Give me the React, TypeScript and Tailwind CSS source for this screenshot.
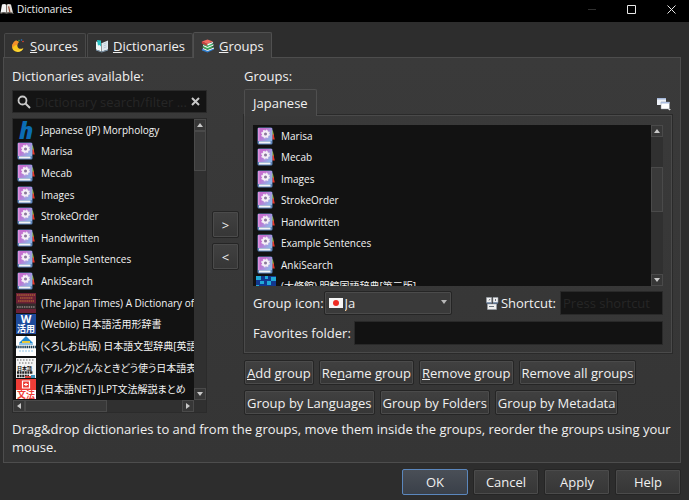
import type { ReactNode } from 'react'

const addons = ['Marisa', 'Mecab', 'Images', 'StrokeOrder', 'Handwritten', 'Example Sentences', 'AnkiSearch']

function AppIcon() {
  return (
    <svg width="14" height="12" viewBox="0 0 14 12" aria-hidden="true">
      <path d="M2 1.500C4 .5 5.500 1 6.500 2v8C5 9 3 9 .5 10z" fill="#f2f2f2" />
      <path d="M11 1.500C9 .5 7.500 1 6.500 2v8C8 9 10 9 13 10z" fill="#e6e2dc" />
      <path d="M8 3.500l1.200-.3 1.300 6-1.300-.3z" fill="#9b4a36" />
      <path d="M6.500 2v8M.5 10.500c2-1 4.500-1 6 0 1.500-1 4.500-1 7 0" stroke="#77716a" fill="none" />
    </svg>
  )
}

function SourcesIcon() {
  return (
    <svg width="14" height="14" viewBox="0 0 14 14" aria-hidden="true">
      <path d="M4 1.500C0 4-1 8.500 1.500 11.300c3 3 8.500 2 10-2.300-2.500 1.500-5.500 1-6-1.500S5.500 4 7 3z" fill="#f8c81c" />
      <path d="M4 1.500C.5 3.500-.3 6.500.5 9 2 6.500 3.500 5.500 5.300 6c0-1.500.7-2.300 1.700-3z" fill="#f2902b" />
      <path d="M1 9.500c2 2.500 6.500 3 10-.3-1.500 3.800-7 4.800-10 .3z" fill="#ffe14a" />
      <circle cx="7" cy="1.500" r=".8" fill="#3c9b48" />
      <circle cx="9.500" cy="1" r=".8" fill="#2b78c8" />
      <circle cx="11" cy="2.500" r=".8" fill="#e44330" />
    </svg>
  )
}

function DictionariesIcon() {
  return (
    <svg width="14" height="14" viewBox="0 0 14 14" aria-hidden="true">
      <path d="M1 2.500l5.500 1.500v8.500L1 10.500z" fill="#eef7f8" />
      <path d="M13 1.500L7 4v8.500l6-2z" fill="#dfe9f0" />
      <path d="M2 1l4 .5v6L4.500 6 3 6.500z" fill="#25c2c4" />
      <path d="M8.500 5l3-1.200M8.500 7l3-1.200M8.500 9l3-1.200" stroke="#a9bac6" strokeWidth=".7" />
      <path d="M1 11l5.700 2L13 11" stroke="#7d96ab" fill="none" />
    </svg>
  )
}

function GroupsIcon() {
  return (
    <svg width="14" height="14" viewBox="0 0 14 14" aria-hidden="true">
      <path d="M1 9.500l5 2 7-2.500v1.500L6.500 13.500 1 11.500z" fill="#2f7fd0" />
      <path d="M1 8l5-2 7 2-6.500 3z" fill="#3aa757" />
      <path d="M2 9.500l4.500 2L13 9" stroke="#fff" fill="none" />
      <path d="M1.500 5.500l5-2 6.500 2-6.500 2.800z" fill="#39b06c" />
      <path d="M2 6.500l4.500 2L12.500 6" stroke="#fff" fill="none" />
      <path d="M.8 2.500L6.500.5 12 2.500 6.500 5z" fill="#f06a62" />
      <path d="M.8 2.500v2L6.500 7V5z" fill="#c93c3c" />
      <path d="M6.500 5.800l5.500-2.300" stroke="#fff" strokeWidth="1.300" />
    </svg>
  )
}

function AddonIcon() {
  return (
    <svg width="18" height="18" viewBox="0 0 18 18" className="shrink-0" aria-hidden="true">
      <defs>
        <linearGradient id="cover" x1="0" y1="0" x2="1" y2=".6">
          <stop offset=".4" stopColor="#c46fd0" />
          <stop offset="1" stopColor="#8fb2e6" />
        </linearGradient>
      </defs>
      <path d="M14 1.500l2 2.500 1 5h-3z" fill="#b8c92c" />
      <path d="M15 8l1.500-1 1.300 5.500H15z" fill="#e8392a" />
      <path d="M1.500.5H14a1.500 1.500 0 0 1 1.500 1.500v14a1.500 1.500 0 0 1-1.500 1.500H2A1.500 1.500 0 0 1 .5 16V1.500z" fill="#5f86bd" />
      <path d="M1 1h14v13H1z" fill="url(#cover)" />
      <path d="M1 1h1.500v13H1z" fill="#dc93dc" />
      <path d="M2 14.500h11.500v2H2z" fill="#f4f4f4" />
      <circle cx="8.500" cy="7" r="3.700" fill="none" stroke="#ece4f0" strokeWidth="1.500" strokeDasharray="1.600 1.306" />
      <circle cx="8.500" cy="7" r="2.500" fill="none" stroke="#f4f0f6" strokeWidth="2" />
      <circle cx="8.500" cy="7" r="1.300" fill="#8b7f92" />
    </svg>
  )
}

function MorphologyIcon() {
  return (
    <svg width="20" height="20" viewBox="0 0 20 20" className="shrink-0 overflow-visible" aria-hidden="true">
      <text x="3" y="19" fontSize="23" fontWeight="800" fontStyle="italic" fontFamily="Open Sans, sans-serif" fill="#0b6cb5">h</text>
    </svg>
  )
}

function JapanTimesIcon() {
  return (
    <svg width="20" height="20" viewBox="0 0 20 20" className="shrink-0" aria-hidden="true">
      <path d="M0 0h20v20H0z" fill="#6b2035" />
      <path d="M1 2h18M4 5h13M2 8h16" stroke="#c47a35" strokeWidth="1.200" strokeDasharray="1.500 .6" />
      <path d="M0 10.500h20V16H0z" fill="#332b2c" />
      <path d="M1 14h18" stroke="#8d8580" strokeWidth="1.500" strokeDasharray="1.500 .8" />
    </svg>
  )
}

function WeblioIcon() {
  return (
    <svg width="20" height="20" viewBox="0 0 20 20" className="shrink-0 overflow-visible" aria-hidden="true">
      <path d="M0 0h20v20H0z" fill="#1e4b9c" />
      <text x="10" y="9" textAnchor="middle" fontSize="11" fontWeight="700" fontFamily="Open Sans, sans-serif" fill="#fff">W</text>
      <text x="10" y="18" textAnchor="middle" fontSize="9" fontWeight="700" fontFamily="Noto Sans CJK JP, sans-serif" fill="#fff">活用</text>
    </svg>
  )
}

function KuroshioIcon() {
  return (
    <svg width="20" height="20" viewBox="0 0 20 20" className="shrink-0" aria-hidden="true">
      <path d="M0 0h20v20H0z" fill="#fdfdfd" />
      <path d="M10 0l7 7H3z" fill="#2087cf" />
      <path d="M6 5h8v2H6z" fill="#e9c93b" />
      <path d="M3 8h14" stroke="#2087cf" />
      <path d="M0 11h20" stroke="#24455c" strokeWidth="2.500" strokeDasharray="1.500 .6" />
      <path d="M3 15h14" stroke="#8fc3e4" strokeDasharray="2 1" />
    </svg>
  )
}

function AlcIcon() {
  return (
    <svg width="20" height="20" viewBox="0 0 20 20" className="shrink-0 overflow-visible" aria-hidden="true">
      <path d="M0 0h20v20H0z" fill="#f4f4f4" />
      <path d="M1 2h17M3 5h14" stroke="#999" strokeWidth="1.500" strokeDasharray="1.500 1.500" />
      <text x="1" y="12" fontSize="5" fontWeight="700" fontFamily="Noto Sans CJK JP, sans-serif" fill="#111">日本語</text>
      <path d="M1 14.500h16M1 18h12" stroke="#222" strokeWidth="2.500" strokeDasharray="2 .6" />
      <path d="M9 18h6v2H9z" fill="#d6453c" />
      <path d="M15 17h4v3h-4z" fill="#3e91bd" />
    </svg>
  )
}

function NetIcon() {
  return (
    <svg width="20" height="20" viewBox="0 0 20 20" className="shrink-0 overflow-visible" aria-hidden="true">
      <path d="M0 0h20v20H0z" fill="#fff" />
      <path d="M0 0h20v11H0z" fill="#ee3d37" />
      <path d="M6.500 2h7v7h-7zM8 5.500h4M10 4v3" fill="none" stroke="#fff" strokeWidth="1.200" />
      <text x="10" y="19" textAnchor="middle" fontSize="9" fontWeight="700" fontFamily="Noto Sans CJK JP, sans-serif" fill="#ee3d37">文法</text>
    </svg>
  )
}

function MeikyoIcon() {
  return (
    <svg width="20" height="20" viewBox="0 0 20 20" className="shrink-0" aria-hidden="true">
      <path d="M0 0h20v20H0z" fill="#12388f" />
      <path d="M0 0h5v4H0zM9 0h3v3H9zM15 1h5v4h-5zM4 5h4v3H4zM11 5h4v4h-4zM0 9h3v3H0z" fill="#21a9d6" />
    </svg>
  )
}

function WindowsIcon() {
  return (
    <svg width="14" height="14" viewBox="0 0 14 14" aria-hidden="true">
      <path d="M0 1h9v7H0z" fill="#eef2f8" />
      <path d="M0 1h9v1.500H0z" fill="#a3b6d8" />
      <path d="M4 5h8.500v7H4z" fill="#fff" stroke="#8a929c" strokeWidth=".5" />
      <path d="M4 5h8.500v1.500H4z" fill="#a9bcdf" />
      <path d="M11 12h3l-1.500 1.500z" fill="#ddd" />
    </svg>
  )
}

function KeysIcon() {
  return (
    <svg width="13" height="13" viewBox="0 0 13 13" aria-hidden="true">
      <path d="M.5.500h5v5h-5zM7 .5h5v5H7zM1.500 7h9v5.500h-9z" fill="#f0f0f0" stroke="#9aa3ad" strokeWidth=".6" />
      <path d="M3 3.500L4 2M9.500 2v2M3 9.500h5" stroke="#6a737e" />
      <path d="M.5 6h5M7 6h5" stroke="#7090bb" />
    </svg>
  )
}

function Arrow({ dir }: { dir: 'up' | 'down' | 'left' | 'right' }) {
  const turn = { up: 0, right: 90, down: 180, left: 270 }[dir]
  return (
    <span className="flex size-3 shrink-0 items-center justify-center border border-[#4a4a4a] bg-[#373737]">
      <svg width="8" height="8" viewBox="0 0 8 8" aria-hidden="true">
        <path d="M4 2l3 4H1z" fill="#c8c8c8" transform={`rotate(${turn} 4 4)`} />
      </svg>
    </span>
  )
}

function Btn({ children, className = '' }: { children: ReactNode; className?: string }) {
  return (
    <button
      type="button"
      className={`rounded-xs border border-[#252525] bg-linear-to-b from-[#414141] to-[#363636] shadow-[inset_0_0_0_1px_#4b4b4b] ${className}`}
    >
      {children}
    </button>
  )
}

function Row({ icon, children }: { icon: ReactNode; children: ReactNode }) {
  return (
    <li className="flex items-center gap-[5px] whitespace-nowrap">
      <span className="flex w-5 shrink-0 justify-center">{icon}</span>
      {children}
    </li>
  )
}

const listText = "text-[10px] leading-4 text-[#f4f4f4] [font-feature-settings:'palt']"

export default function App() {
  return (
    <div className="flex min-h-screen flex-col bg-[#2d2d2d] font-['Open_Sans','Noto_Sans_CJK_JP',sans-serif] text-[13px] leading-[18px] text-[#f0f0f0]">
      <header className="flex h-[22px] items-center bg-black pb-1">
        <AppIcon />
        <h1 className="ml-[3px] text-[10px]">Dictionaries</h1>
        <div className="ml-auto flex gap-[31px] pr-[13px]">
          <button type="button" aria-label="Minimize">
            <svg width="8" height="9" viewBox="0 0 8 9"><path d="M0 4.500h8" stroke="#303030" /></svg>
          </button>
          <button type="button" aria-label="Maximize">
            <svg width="9" height="9" viewBox="0 0 9 9"><path d="M.5.500h8v8h-8z" fill="none" stroke="#e8e8e8" /></svg>
          </button>
          <button type="button" aria-label="Close">
            <svg width="9" height="9" viewBox="0 0 9 9"><path d="M.5.500l8 8M8.500.500l-8 8" stroke="#e8e8e8" /></svg>
          </button>
        </div>
      </header>

      <div className="flex flex-1 flex-col pt-[10px] pr-2 pl-[3px]">
        <div role="tablist" className="flex items-end pl-px">
          <button type="button" role="tab" aria-selected="false" className="flex h-6 items-center gap-1 rounded-t-xs border border-b-0 border-[#494949] bg-[#333] px-[7px]">
            <SourcesIcon />
            <span><u>S</u>ources</span>
          </button>
          <button type="button" role="tab" aria-selected="false" className="ml-px flex h-6 items-center gap-1 rounded-t-xs border border-b-0 border-[#494949] bg-[#333] px-[7px]">
            <DictionariesIcon />
            <span><u>D</u>ictionaries</span>
          </button>
          <button type="button" role="tab" aria-selected="true" className="z-10 -mb-px flex h-[26px] items-center gap-1 rounded-t-xs border border-b-0 border-[#505050] bg-[#3a3a3a] px-[7px]">
            <GroupsIcon />
            <span><u>G</u>roups</span>
          </button>
        </div>

        <main className="flex flex-1 flex-col border border-[#4d4d4d] bg-linear-to-b from-[#3a3a3a] to-[#353535] px-2 pt-[9px] pb-[5px]">
          <div className="flex">
            <section className="flex w-[195px] shrink-0 flex-col">
              <label htmlFor="filter">Dictionaries available:</label>
              <div className="mt-[5px] flex h-[23px] items-center border border-[#2a2a2a] bg-[#141414] px-1">
                <svg width="14" height="14" viewBox="0 0 14 14" aria-hidden="true">
                  <circle cx="5.500" cy="5.500" r="4" fill="none" stroke="#c9c9c9" strokeWidth="1.800" />
                  <path d="M8.500 8.500l4.500 4.500" stroke="#c9c9c9" strokeWidth="2" />
                </svg>
                <input id="filter" placeholder="Dictionary search/filter ..." className="ml-1 w-full min-w-0 flex-1 outline-none placeholder:text-[#262626]" />
                <button type="button" aria-label="Clear" className="px-[2px]">
                  <svg width="9" height="9" viewBox="0 0 9 9"><path d="M1 1l7 7M8 1L1 8" stroke="#c9c9c9" strokeWidth="2" /></svg>
                </button>
              </div>

              <div className="mt-[5px] border border-[#2b2b2b] bg-[#303030]">
                <div className="flex h-[281px]">
                  <ul className={`grid min-w-0 flex-1 auto-rows-fr overflow-hidden bg-[#121212] pl-[3px] ${listText}`}>
                    <Row icon={<MorphologyIcon />}>Japanese (JP) Morphology</Row>
                    {addons.map((name) => (
                      <Row key={name} icon={<AddonIcon />}>{name}</Row>
                    ))}
                    <Row icon={<JapanTimesIcon />}>(The Japan Times) A Dictionary of Japanese</Row>
                    <Row icon={<WeblioIcon />}>(Weblio) 日本語活用形辞書</Row>
                    <Row icon={<KuroshioIcon />}>(くろしお出版) 日本語文型辞典[英語版]</Row>
                    <Row icon={<AlcIcon />}>(アルク)どんなときどう使う日本語表現文型</Row>
                    <Row icon={<NetIcon />}>(日本語NET) JLPT文法解説まとめ</Row>
                  </ul>
                  <div className="flex w-3 flex-col" aria-hidden="true">
                    <Arrow dir="up" />
                    <span className="h-10 border border-[#4a4a4a] bg-[#3a3a3a]" />
                    <span className="flex-1" />
                    <Arrow dir="down" />
                  </div>
                </div>
                <div className="flex pr-3" aria-hidden="true">
                  <Arrow dir="left" />
                  <span className="w-[82px] border border-[#4a4a4a] bg-[#393939]" />
                  <span className="flex-1" />
                  <Arrow dir="right" />
                </div>
              </div>
            </section>

            <div className="mx-[5px] flex flex-col gap-[5px] pt-[144px]">
              <Btn className="h-[27px] w-[27px]">&gt;</Btn>
              <Btn className="h-[27px] w-[27px]">&lt;</Btn>
            </div>

            <section className="min-w-0 flex-1">
              <h2>Groups:</h2>
              <div className="mt-1 flex items-end justify-between pr-px">
                <button type="button" role="tab" aria-selected="true" className="z-10 -mb-px h-[27px] rounded-t-xs border border-b-0 border-[#4f4f4f] bg-[#3a3a3a] px-2">
                  Japanese
                </button>
                <button type="button" aria-label="All groups" className="pb-1"><WindowsIcon /></button>
              </div>
              <div className="border border-[#4a4a4a] px-2 pt-[9px] pb-[7px] shadow-[0_0_0_1px_#2a2a2a]">
                <div className="flex h-[161px] overflow-hidden">
                  <ul className={`grid h-[172px] min-w-0 flex-1 auto-rows-fr bg-[#121212] pl-[3px] ${listText}`}>
                    {addons.map((name) => (
                      <Row key={name} icon={<AddonIcon />}>{name}</Row>
                    ))}
                    <Row icon={<MeikyoIcon />}>(大修館) 明鏡国語辞典[第三版]</Row>
                  </ul>
                  <div className="flex w-3 flex-col bg-[#303030]" aria-hidden="true">
                    <Arrow dir="up" />
                    <span className="h-[30px]" />
                    <span className="h-[45px] border border-[#4a4a4a] bg-[#3a3a3a]" />
                    <span className="flex-1" />
                    <Arrow dir="down" />
                  </div>
                </div>

                <div className="mt-[5px] flex items-center">
                  <label htmlFor="icon">Group icon:</label>
                  <div className="relative w-[128px]">
                    <select id="icon" className="h-6 w-full appearance-none rounded-xs border border-[#252525] bg-[#3a3a3a] pl-5 shadow-[inset_0_0_0_1px_#4b4b4b]">
                      <option>Ja</option>
                    </select>
                    <svg width="14" height="10" viewBox="0 0 14 10" className="pointer-events-none absolute top-[7px] left-[5px]" aria-hidden="true">
                      <path d="M0 0h14v10H0z" fill="#f5f5f5" /><circle cx="7" cy="5" r="3" fill="#ee2a22" />
                    </svg>
                    <svg width="8" height="5" viewBox="0 0 8 5" className="pointer-events-none absolute top-[9px] right-1" aria-hidden="true">
                      <path d="M1 0h6L4 4z" fill="#b8b8b8" />
                    </svg>
                  </div>
                  <label htmlFor="shortcut" className="ml-auto flex items-center gap-[2px]"><KeysIcon />Shortcut:</label>
                  <input id="shortcut" placeholder="Press shortcut" className="ml-1 h-6 w-[103px] border border-[#292929] bg-[#141414] px-[2px] outline-none placeholder:text-[#262626]" />
                </div>

                <div className="mt-[6px] flex items-center gap-[3px]">
                  <label htmlFor="favorites">Favorites folder:</label>
                  <input id="favorites" className="h-6 min-w-0 flex-1 border border-[#292929] bg-[#121212] px-1 outline-none" />
                </div>
              </div>

              <div className="mt-[7px] flex flex-wrap gap-[5px]">
                <Btn className="h-[25px] px-[2px]"><u>A</u>dd group</Btn>
                <Btn className="h-[25px] px-[2px]">Re<u>n</u>ame group</Btn>
                <Btn className="h-[25px] px-[2px]"><u>R</u>emove group</Btn>
                <Btn className="h-[25px] px-[2px]">Remove all groups</Btn>
                <Btn className="h-[25px] px-[2px]">Group by Languages</Btn>
                <Btn className="h-[25px] px-[2px]">Group by Folders</Btn>
                <Btn className="h-[25px] px-[2px]">Group by Metadata</Btn>
              </div>
            </section>
          </div>

          <p className="mt-[5px]">
            Drag&amp;drop dictionaries to and from the groups, move them inside the groups, reorder the groups using your mouse.
          </p>
        </main>

        <footer className="flex justify-end gap-[5px] pt-[6px] pb-[5px]">
          <button type="button" className="h-[26px] w-[66px] rounded-xs border border-[#5b87bd] bg-linear-to-b from-[#4a4f57] to-[#3a4049]">OK</button>
          <Btn className="h-[26px] w-[66px]">Cancel</Btn>
          <Btn className="h-[26px] w-[66px]">Apply</Btn>
          <Btn className="h-[26px] w-[66px]">Help</Btn>
        </footer>
      </div>
    </div>
  )
}
